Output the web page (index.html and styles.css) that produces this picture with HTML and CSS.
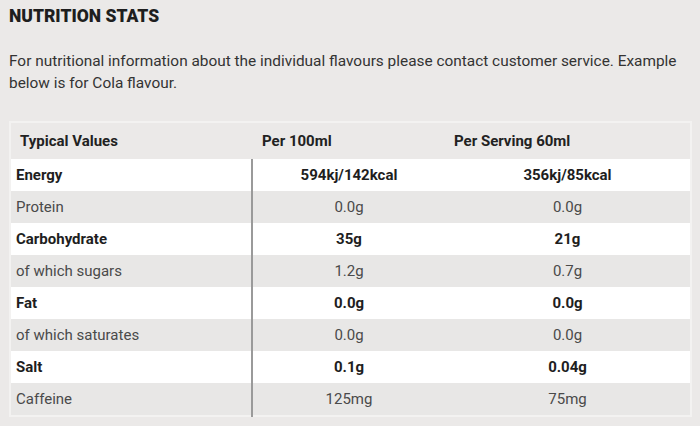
FILE: index.html
```html
<!DOCTYPE html>
<html>
<head>
<meta charset="utf-8">
<link rel="stylesheet" href="styles.css">
</head>
<body>
<h2 class="title">NUTRITION STATS</h2>
<p class="intro">For nutritional information about the individual flavours please contact customer service. Example below is for Cola flavour.</p>
<table class="nutri">
  <thead>
    <tr><th class="c1">Typical Values</th><th class="c2">Per 100ml</th><th class="c3">Per Serving 60ml</th></tr>
  </thead>
  <tbody>
    <tr class="bold"><td>Energy</td><td>594kj/142kcal</td><td>356kj/85kcal</td></tr>
    <tr class="alt"><td>Protein</td><td>0.0g</td><td>0.0g</td></tr>
    <tr class="bold"><td>Carbohydrate</td><td>35g</td><td>21g</td></tr>
    <tr class="alt"><td>of which sugars</td><td>1.2g</td><td>0.7g</td></tr>
    <tr class="bold"><td>Fat</td><td>0.0g</td><td>0.0g</td></tr>
    <tr class="alt"><td>of which saturates</td><td>0.0g</td><td>0.0g</td></tr>
    <tr class="bold"><td>Salt</td><td>0.1g</td><td>0.04g</td></tr>
    <tr class="alt"><td>Caffeine</td><td>125mg</td><td>75mg</td></tr>
  </tbody>
</table>
</body>
</html>
```

FILE: styles.css
```css
html, body {
  margin: 0;
  padding: 0;
  background: #ebe9e8;
}
body {
  padding: 0 9px;
  font-family: Roboto, "Liberation Sans", sans-serif;
  color: #333;
}
.title {
  margin: 0;
  padding-top: 6px;
  font-family: Roboto, "Liberation Sans", sans-serif;
  font-weight: 900;
  font-size: 17.5px;
  line-height: 20px;
  color: #1e1e1e;
}
.intro {
  margin: 24px 0 0;
  font-size: 15.4px;
  line-height: 22px;
  color: #333;
}
.nutri {
  margin-top: 27px;
  width: 683px;
  border-collapse: collapse;
  border: 2px solid #f3f2f1;
  font-size: 15px;
}
.nutri th {
  text-align: left;
  font-weight: 700;
  color: #222;
  height: 36px;
  padding: 0 0 0 9px;
}
.nutri th.c1 { width: 232px; }
.nutri th.c2 { width: 183px; padding-left: 10px; }
.nutri td {
  height: 32px;
  padding: 0;
  text-align: center;
  color: #4a4a4a;
}
.nutri td:first-child {
  text-align: left;
  padding-left: 5px;
  border-right: 2px solid #9a9a9a;
}
.nutri tr.bold td {
  background: #fff;
  font-weight: 700;
  color: #1e1e1e;
}
.nutri tr.alt td {
  background: #e8e7e6;
}
```
